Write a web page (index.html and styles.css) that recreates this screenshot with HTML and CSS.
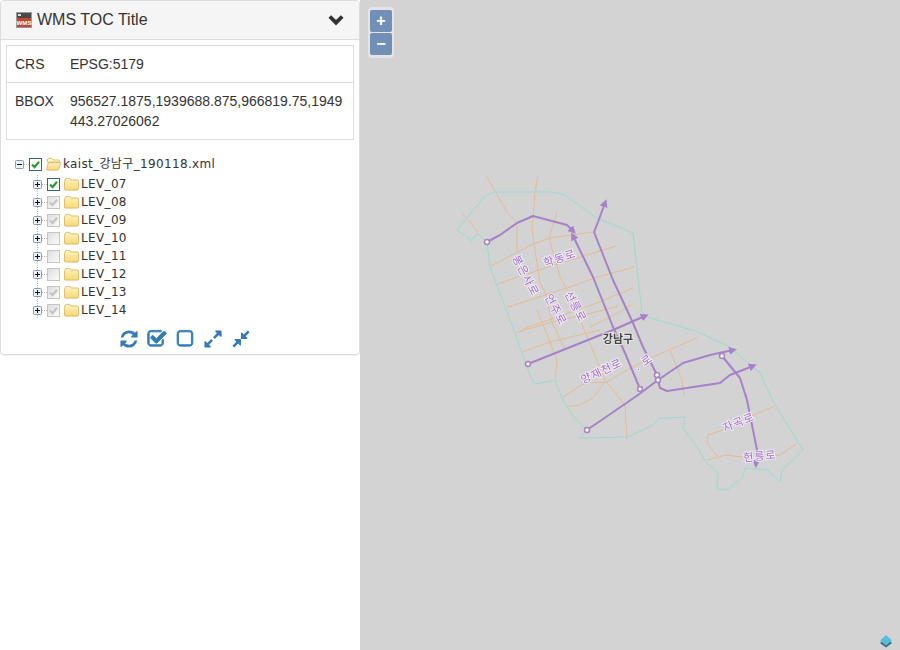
FILE: index.html
```html
<!DOCTYPE html>
<html lang="ko">
<head>
<meta charset="utf-8">
<title>WMS TOC</title>
<link rel="stylesheet" href="styles.css">
</head>
<body>
<svg class="defs" width="0" height="0" aria-hidden="true">
  <defs>
    <linearGradient id="fold" x1="0" y1="0" x2="0" y2="1">
      <stop offset="0" stop-color="#fff3c0"/>
      <stop offset="1" stop-color="#f8d878"/>
    </linearGradient>
    <symbol id="folder" viewBox="0 0 16 14">
      <path d="M1.500 3V2.200C1.500 1.500 2 1 2.700 1H6l1.500 1.700h6.800c.7 0 1.200.5 1.200 1.200v8.300c0 .6-.5 1.300-1.200 1.300H1.800C1 13.500 .5 13 .5 12.200V4c0-.6.4-1 1-1z" fill="url(#fold)" stroke="#dcb760" stroke-width="1"/>
    </symbol>
    <symbol id="folder-open" viewBox="0 0 16 14">
      <path d="M1.500 5V2.200C1.500 1.500 2 1 2.700 1H6l1.500 1.700h5.800c.7 0 1.200.5 1.200 1.200V5z" fill="#fff6cf" stroke="#dcb760"/>
      <path d="M3.500 5.500h11.300c.6 0 .9.4.7 1l-1.800 6c-.2.6-.6 1-1.300 1H1.600c-.7 0-1.100-.4-1-1l1.700-6c.2-.6.6-1 1.200-1z" fill="url(#fold)" stroke="#dcb760"/>
    </symbol>
    <symbol id="plus" viewBox="0 0 9 9">
      <rect x=".5" y=".5" width="8" height="8" rx="1" fill="#eef2f6" stroke="#7f9db9"/>
      <path d="M2 4.500h5M4.500 2v5" stroke="#111" stroke-width="1"/>
    </symbol>
    <symbol id="minus" viewBox="0 0 9 9">
      <rect x=".5" y=".5" width="8" height="8" rx="1" fill="#eef2f6" stroke="#7f9db9"/>
      <path d="M2 4.500h5" stroke="#111" stroke-width="1"/>
    </symbol>
    <symbol id="tick" viewBox="0 0 13 13">
      <path d="M3 6.500l2.500 2.700L10 3.800" fill="none" stroke="currentColor" stroke-width="2.200"/>
    </symbol>
    <marker id="arrow" viewBox="0 0 10 10" refX="5" refY="5" markerWidth="4" markerHeight="4" orient="auto-start-reverse">
      <path d="M0 0L10 5L0 10z" fill="#a682c8"/>
    </marker>
  </defs>
</svg>

<div class="page">
  <aside class="sidebar">
    <section class="panel">
      <header class="panel-head">
        <h1 class="panel-title">
          <svg class="wms-icon" viewBox="0 0 16 16" width="16" height="16">
            <rect width="16" height="16" fill="#9a9a9a"/>
            <rect x="1" y="1" width="14" height="14" fill="#4a4a4a"/>
            <rect x="2" y="2" width="3" height="2" fill="#ddd"/>
            <rect x="1" y="6" width="14" height="9" fill="#c4482c"/>
            <text x="8" y="12.500" class="wms-text" text-anchor="middle">WMS</text>
          </svg>
          <span>WMS TOC Title</span>
        </h1>
        <svg class="chevron" viewBox="0 0 16 12" width="16" height="12">
          <path d="M1.800 2.500L8 8.700l6.200-6.200" fill="none" stroke="#333" stroke-width="3.800"/>
        </svg>
      </header>
      <div class="panel-body">
        <table class="info">
          <tr><td>CRS</td><td>EPSG:5179</td></tr>
          <tr><td>BBOX</td><td class="wrap">956527.1875,1939688.875,966819.75,1949443.27026062</td></tr>
        </table>
        <div class="tree">
          <div class="row">
            <svg class="exp"><use href="#minus"/></svg>
            <span class="dash"></span>
            <span class="cb on"><svg><use href="#tick"/></svg></span>
            <svg class="fold"><use href="#folder-open"/></svg>
            <span class="label">kaist_강남구_190118.xml</span>
          </div>
          <div class="children">
            <div class="row"><svg class="exp"><use href="#plus"/></svg><span class="dash"></span><span class="cb on"><svg><use href="#tick"/></svg></span><svg class="fold"><use href="#folder"/></svg><span class="label">LEV_07</span></div>
            <div class="row"><svg class="exp"><use href="#plus"/></svg><span class="dash"></span><span class="cb off"><svg><use href="#tick"/></svg></span><svg class="fold"><use href="#folder"/></svg><span class="label">LEV_08</span></div>
            <div class="row"><svg class="exp"><use href="#plus"/></svg><span class="dash"></span><span class="cb off"><svg><use href="#tick"/></svg></span><svg class="fold"><use href="#folder"/></svg><span class="label">LEV_09</span></div>
            <div class="row"><svg class="exp"><use href="#plus"/></svg><span class="dash"></span><span class="cb off"></span><svg class="fold"><use href="#folder"/></svg><span class="label">LEV_10</span></div>
            <div class="row"><svg class="exp"><use href="#plus"/></svg><span class="dash"></span><span class="cb off"></span><svg class="fold"><use href="#folder"/></svg><span class="label">LEV_11</span></div>
            <div class="row"><svg class="exp"><use href="#plus"/></svg><span class="dash"></span><span class="cb off"></span><svg class="fold"><use href="#folder"/></svg><span class="label">LEV_12</span></div>
            <div class="row"><svg class="exp"><use href="#plus"/></svg><span class="dash"></span><span class="cb off"><svg><use href="#tick"/></svg></span><svg class="fold"><use href="#folder"/></svg><span class="label">LEV_13</span></div>
            <div class="row"><svg class="exp"><use href="#plus"/></svg><span class="dash"></span><span class="cb off"><svg><use href="#tick"/></svg></span><svg class="fold"><use href="#folder"/></svg><span class="label">LEV_14</span></div>
          </div>
        </div>
        <div class="tools">
          <svg class="tool" viewBox="0 0 1792 1792"><path d="M1639 1056q0 5-1 7-64 268-268 434.500t-478 166.500q-146 0-282.500-55t-243.500-157l-129 129q-19 19-45 19t-45-19-19-45v-448q0-26 19-45t45-19h448q26 0 45 19t19 45-19 45l-137 137q71 66 161 102t187 36q134 0 250-65t186-179q11-17 53-117 8-23 30-23h192q13 0 22.500 9.500t9.500 22.500zm25-800v448q0 26-19 45t-45 19h-448q-26 0-45-19t-19-45 19-45l138-138q-148-137-349-137-134 0-250 65t-186 179q-11 17-53 117-8 23-30 23h-199q-13 0-22.500-9.500t-9.500-22.500v-7q65-268 270-434.500t480-166.500q146 0 284 55.500t245 156.500l130-129q19-19 45-19t45 19 19 45z"/></svg>
          <svg class="tool bold" viewBox="0 0 1792 1792"><path d="M1472 930v318q0 119-84.500 203.500t-203.500 84.500h-832q-119 0-203.500-84.500t-84.500-203.500v-832q0-119 84.500-203.500t203.500-84.500h832q63 0 117 25 15 7 18 23 3 17-9 29l-49 49q-10 10-23 10-3 0-9-2-23-6-45-6h-832q-66 0-113 47t-47 113v832q0 66 47 113t113 47h832q66 0 113-47t47-113v-254q0-13 9-22l64-64q10-10 23-10 6 0 12 3 20 8 20 29zm231-489l-814 814q-24 24-57 24t-57-24l-430-430q-24-24-24-57t24-57l110-110q24-24 57-24t57 24l263 263 647-647q24-24 57-24t57 24l110 110q24 24 24 57t-24 57z"/></svg>
          <svg class="tool bold" viewBox="0 0 1792 1792"><path d="M1312 256h-832q-66 0-113 47t-47 113v832q0 66 47 113t113 47h832q66 0 113-47t47-113v-832q0-66-47-113t-113-47zm288 160v832q0 119-84.500 203.500t-203.500 84.500h-832q-119 0-203.500-84.500t-84.500-203.500v-832q0-119 84.500-203.500t203.500-84.500h832q119 0 203.500 84.500t84.500 203.500z"/></svg>
          <svg class="tool" viewBox="0 0 1792 1792"><path d="M883 1056q0 13-10 23l-332 332 144 144q19 19 19 45t-19 45-45 19h-448q-26 0-45-19t-19-45v-448q0-26 19-45t45-19 45 19l144 144 332-332q10-10 23-10t23 10l114 114q10 10 10 23zm781-864v448q0 26-19 45t-45 19-45-19l-144-144-332 332q-10 10-23 10t-23-10l-114-114q-10-10-10-23t10-23l332-332-144-144q-19-19-19-45t19-45 45-19h448q26 0 45 19t19 45z"/></svg>
          <svg class="tool" viewBox="0 0 1792 1792"><path d="M896 960v448q0 26-19 45t-45 19-45-19l-144-144-332 332q-10 10-23 10t-23-10l-114-114q-10-10-10-23t10-23l332-332-144-144q-19-19-19-45t19-45 45-19h448q26 0 45 19t19 45zm755-672q0 13-10 23l-332 332 144 144q19 19 19 45t-19 45-45 19h-448q-26 0-45-19t-19-45v-448q0-26 19-45t45-19 45 19l144 144 332-332q10-10 23-10t23 10l114 114q10 10 10 23z"/></svg>
        </div>
      </div>
    </section>
  </aside>

  <main class="map">
    <svg class="map-canvas" viewBox="360 0 540 650" width="540" height="650">
      <g class="roads">
        <path d="M487 177L507 212L517 223L517 253"/>
        <path d="M538 175L535 193L532 230L540 283L545 292L552 322L565 350"/>
        <path d="M463 214L478 232"/>
        <path d="M557 212L549 238L560 277L572 300L583 327L605 380L625 405L627 440"/>
        <path d="M491 266L533 244L550 238L593 232"/>
        <path d="M497 284L548 267L616 246"/>
        <path d="M505 308L570 287L597 277L635 267"/>
        <path d="M523 329L597 303L633 288"/>
        <path d="M590 327L618 313L633 304"/>
        <path d="M515 333L552 322L600 311L618 306"/>
        <path d="M520 353L550 342L600 330"/>
        <path d="M537 310L550 342L557 360L555 380"/>
        <path d="M563 397L585 383L607 382L627 370L650 358L697 338"/>
        <path d="M565 407L580 405L593 398L605 382"/>
        <path d="M670 350L682 380L684 395"/>
        <path d="M775 406L747 418L723 430L708 435L707 443L717 456"/>
        <path d="M708 460L725 455L743 457L780 455L798 443"/>
      </g>
      <g class="bound">
        <path class="bound-wide" d="M487 242L477 233L472 241L457 230L483 198L493 192L552 192L563 194L597 218L633 233L642 313L650 318L693 330L730 347L760 373L775 405L803 450L782 470L780 482L770 473L768 470L745 468L743 477L727 490L717 489L718 473L707 463L690 437L683 428L685 417L670 418L660 418L653 425L628 437L580 438L587 430L572 415L562 398L555 380L535 384L530 375L515 333L510 320L490 267Z"/>
        <path class="bound-thin" d="M487 242L477 233L472 241L457 230L483 198L493 192L552 192L563 194L597 218L633 233L642 313L650 318L693 330L730 347L760 373L775 405L803 450L782 470L780 482L770 473L768 470L745 468L743 477L727 490L717 489L718 473L707 463L690 437L683 428L685 417L670 418L660 418L653 425L628 437L580 438L587 430L572 415L562 398L555 380L535 384L530 375L515 333L510 320L490 267Z"/>
      </g>
      <g class="routes">
        <path marker-end="url(#arrow)" d="M487 242L500 235L517 223L533 216L567 225L573 231"/>
        <path marker-start="url(#arrow)" d="M573 236L593 277L613 327L625 353L640 389"/>
        <path marker-end="url(#arrow)" d="M594 232L598 222L605 203"/>
        <path d="M594 232L613 280L633 323L643 347L657 375"/>
        <path marker-end="url(#arrow)" d="M528 364L613 330L645 316"/>
        <path marker-end="url(#arrow)" d="M587 430L638 395L658 380L683 363L710 355L733 350"/>
        <path marker-end="url(#arrow)" d="M658 380L660 388L667 391L720 383L730 375L753 366"/>
        <path marker-end="url(#arrow)" d="M722 356L740 378L747 400L757 450L756 464"/>
      </g>
      <g class="stops">
        <circle cx="487" cy="242" r="2.500"/>
        <circle cx="528" cy="364" r="2.500"/>
        <circle cx="587" cy="430" r="2.500"/>
        <circle cx="640" cy="389" r="2.500"/>
        <circle cx="657" cy="375" r="2.500"/>
        <circle cx="658" cy="380" r="2.500"/>
        <circle cx="722" cy="356" r="2.500"/>
      </g>
      <g class="road-labels">
        <text transform="translate(560 259) rotate(-18)">학동로</text>
        <text transform="translate(525 276) rotate(62)">봉은사로</text>
        <text transform="translate(555 310) rotate(62)">언주로</text>
        <text transform="translate(575 307) rotate(62)">선릉로</text>
        <text transform="translate(602 372) rotate(-25)">양재천로</text>
        <text transform="translate(644 363) rotate(-35)">. 로</text>
        <text transform="translate(739 423) rotate(-22)">자곡로</text>
        <text transform="translate(760 457) rotate(-6)">헌릉로</text>
      </g>
      <text class="district" x="618" y="340">강남구</text>
    </svg>
    <div class="zoom">
      <button class="zoom-btn" type="button">+</button>
      <button class="zoom-btn" type="button">−</button>
    </div>
    <svg class="layers" viewBox="0 0 14 14" width="14" height="14">
      <path d="M7 4.500L13 9L7 13.500L1 9z" fill="#35707f"/>
      <path d="M7 1L13 6.500L7 11.500L1 6.500z" fill="#57c0d8"/>
    </svg>
  </main>
</div>
</body>
</html>
```

FILE: styles.css
```css
* { box-sizing: border-box; }
html, body { margin: 0; height: 100%; }
body {
  font-family: "Liberation Sans", "Noto Sans CJK KR", sans-serif;
  font-size: 14px;
  line-height: 20px;
  color: #333;
  background: #fff;
  overflow: hidden;
}
.defs { position: absolute; }
.page { display: flex; width: 900px; height: 650px; }
.sidebar { width: 360px; flex: none; }

.panel {
  border: 1px solid #ddd;
  border-radius: 4px;
  background: #fff;
  box-shadow: 0 1px 1px rgba(0, 0, 0, .05);
}
.panel-head {
  display: flex;
  align-items: center;
  justify-content: space-between;
  height: 39px;
  padding: 0 15px;
  background: #f5f5f5;
  border-bottom: 1px solid #ddd;
  border-radius: 3px 3px 0 0;
}
.panel-title {
  display: flex;
  align-items: center;
  gap: 5px;
  margin: 0;
  font-size: 16px;
  font-weight: 400;
  line-height: 18px;
}
.wms-icon { display: block; }
.wms-text { font: 700 6.200px "Liberation Sans", sans-serif; fill: #fff; }
.chevron { display: block; }

.panel-body { padding: 5px 5px 0; }
.info { width: 100%; border-collapse: collapse; border: 1px solid #ddd; }
.info td { padding: 8px; vertical-align: top; border-top: 1px solid #ddd; }
.wrap { word-break: break-all; }

.tree {
  padding: 15px 0 0 9px;
  font-family: "DejaVu Sans", "Noto Sans CJK KR", sans-serif;
  font-size: 12px;
  letter-spacing: .35px;
}
.row { display: flex; align-items: center; height: 18px; }
.exp { width: 9px; height: 9px; flex: none; }
.dash { width: 5px; flex: none; border-top: 1px dotted #bbb; }
.cb {
  width: 13px;
  height: 13px;
  flex: none;
  border: 1px solid #c6c6c0;
  background: linear-gradient(135deg, #dedede, #fbfbfb);
}
.cb svg { display: block; width: 13px; height: 13px; margin: -1px; color: #c4c4c0; }
.cb.on { border-color: #2d6a80; background: #fff; }
.cb.on svg { color: #2b9a2b; }
.fold { width: 15px; height: 14px; flex: none; margin-left: 4px; }
.label { margin-left: 2px; color: #333; white-space: nowrap; }
.children {
  margin: 2px 0 0 18px;
  background: linear-gradient(#bbb 50%, transparent 50%) 4px 0 / 1px 2px repeat-y;
  height: 144px;
}

.tools {
  display: flex;
  justify-content: center;
  gap: 8px;
  padding: 10px 0 5px 10px;
}
.tool { width: 20px; height: 20px; fill: #337ab7; display: block; }
.tool.bold { stroke: #337ab7; stroke-width: 80; }

.map { position: relative; flex: 1; background: #d3d3d3; overflow: hidden; }
.map-canvas { position: absolute; left: 0; top: 0; filter: blur(.35px); }
.roads path { fill: none; stroke: #e4bb94; stroke-width: 1; }
.bound { opacity: .75; }
.bound path { fill: none; stroke-linejoin: round; }
.bound-wide { stroke: #c6dad7; stroke-width: 3; }
.bound-thin { stroke: #a4cfc9; stroke-width: 1; }
.routes path { fill: none; stroke: #a682c8; stroke-width: 2; stroke-linejoin: round; }
.stops circle { fill: #fff; stroke: #a682c8; stroke-width: 1.500; }
.road-labels text {
  font: 11px "Noto Sans CJK KR", sans-serif;
  letter-spacing: 1px;
  fill: #a070c4;
  stroke: #f0ecf4;
  stroke-width: 2px;
  paint-order: stroke;
  text-anchor: middle;
  dominant-baseline: middle;
}
.district {
  font: 700 11px "Noto Sans CJK KR", sans-serif;
  fill: #444;
  stroke: #e6e6e6;
  stroke-width: 2px;
  paint-order: stroke;
  text-anchor: middle;
  dominant-baseline: middle;
}

.zoom {
  position: absolute;
  left: 8px;
  top: 7px;
  display: flex;
  flex-direction: column;
  gap: 1px;
  padding: 3px 2px;
  border-radius: 4px;
  background: rgba(255, 255, 255, .4);
}
.zoom-btn {
  display: block;
  width: 22px;
  height: 22px;
  margin: 0;
  padding: 0;
  border: 0;
  border-radius: 2px;
  background: rgba(0, 60, 136, .5);
  color: #fff;
  font: 700 16px/20px "Liberation Sans", sans-serif;
}
.layers { position: absolute; right: 7px; bottom: 2px; }
```
